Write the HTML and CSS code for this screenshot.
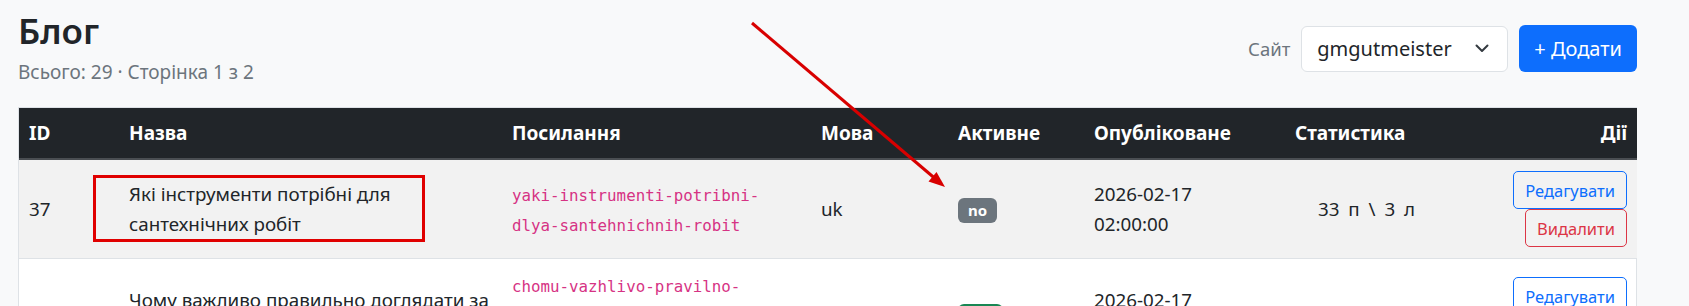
FILE: index.html
```html
<!DOCTYPE html>
<html lang="uk">

<head>
    <meta charset="UTF-8">
    <meta name="viewport" content="width=device-width, initial-scale=1.0">
    <title>Блог</title>
    <link rel="stylesheet" href="styles.css">
</head>

<body>

    <div class="page">
        <div class="page-head">
            <div>
                <h1 class="title">Блог</h1>
                <div class="subtitle">Всього: 29 · Сторінка 1 з 2</div>
            </div>
            <div class="toolbar">
                <span class="toolbar-label">Сайт</span>
                <div class="site-select">
                    <span>gmgutmeister</span>
                    <svg width="14" height="9" viewBox="0 0 14 9">
                        <polyline points="1.5,1.5 7,7 12.5,1.5" fill="none" stroke="#343a40" stroke-width="2"
                            stroke-linecap="round" stroke-linejoin="round" />
                    </svg>
                </div>
                <button class="btn-add">+ Додати</button>
            </div>
        </div>

        <div class="table-wrap">
            <table class="posts">
                <colgroup>
                    <col class="col-id">
                    <col class="col-name">
                    <col class="col-link">
                    <col class="col-lang">
                    <col class="col-active">
                    <col class="col-date">
                    <col class="col-stats">
                    <col class="col-actions">
                </colgroup>
                <thead>
                    <tr>
                        <th>ID</th>
                        <th>Назва</th>
                        <th>Посилання</th>
                        <th>Мова</th>
                        <th>Активне</th>
                        <th>Опубліковане</th>
                        <th>Статистика</th>
                        <th class="text-end">Дії</th>
                    </tr>
                </thead>
                <tbody>
                    <tr class="striped">
                        <td>37</td>
                        <td>Які інструменти потрібні для сантехнічних робіт</td>
                        <td><code>yaki-instrumenti-potribni-dlya-santehnichnih-robit</code></td>
                        <td>uk</td>
                        <td><span class="badge badge-no">no</span></td>
                        <td>2026-02-17<br>02:00:00</td>
                        <td class="stats">33 п \ 3 л</td>
                        <td>
                            <div class="actions">
                                <button class="btn-sm btn-edit">Редагувати</button>
                                <button class="btn-sm btn-delete">Видалити</button>
                            </div>
                        </td>
                    </tr>
                    <tr>
                        <td>36</td>
                        <td>Чому важливо правильно доглядати за сантехнічним обладнанням</td>
                        <td><code>chomu-vazhlivo-pravilno-doglyadati-za-santehnichnim-obladnannyam</code></td>
                        <td>uk</td>
                        <td><span class="badge badge-yes">yes</span></td>
                        <td>2026-02-17<br>02:00:00</td>
                        <td class="stats">41 п \ 5 л</td>
                        <td>
                            <div class="actions">
                                <button class="btn-sm btn-edit">Редагувати</button>
                                <button class="btn-sm btn-delete">Видалити</button>
                            </div>
                        </td>
                    </tr>
                </tbody>
            </table>
        </div>
    </div>

    <!-- annotation drawn over the screenshot -->
    <svg class="annotation" width="1689" height="306" viewBox="0 0 1689 306">
        <rect x="94.5" y="176.5" width="329" height="64" fill="none" stroke="#e00000" stroke-width="3" />
        <line x1="752" y1="23" x2="938" y2="181" stroke="#d80000" stroke-width="3" />
        <polygon points="945,187 928.5,181.5 936.5,172" fill="#d80000" />
    </svg>

</body>

</html>
```

FILE: styles.css
```css
body {
    margin: 0;
    padding: 0;
    position: relative;
    background-color: #f8f9fa;
    color: #212529;
    font-family: "Noto Sans", "DejaVu Sans", sans-serif;
}

.page {
    padding: 0 52px 0 18px;
}

.page-head {
    display: flex;
    justify-content: space-between;
    align-items: flex-start;
}

.title {
    margin: 10px 0 7px;
    font-size: 35px;
    font-weight: 600;
    line-height: 42px;
}

.subtitle {
    color: #6c757d;
    font-size: 19px;
    line-height: 27px;
}

.toolbar {
    display: flex;
    align-items: center;
    gap: 11px;
    margin-top: 25px;
}

.toolbar-label {
    color: #6c757d;
    font-size: 18.5px;
}

.site-select {
    display: flex;
    align-items: center;
    justify-content: space-between;
    box-sizing: border-box;
    width: 207px;
    height: 46px;
    padding: 0 18px 0 15px;
    background-color: #fff;
    border: 1px solid #dee2e6;
    border-radius: 6px;
    font-size: 20px;
}

.btn-add {
    height: 47px;
    padding: 0 15px;
    background-color: #0d6efd;
    color: #fff;
    border: none;
    border-radius: 6px;
    font-family: inherit;
    font-size: 20px;
}

.table-wrap {
    margin-top: 21px;
    background-color: #fff;
    border: 1px solid #dee2e6;
}

.posts {
    width: 100%;
    border-collapse: collapse;
    table-layout: fixed;
}

.col-id { width: 100px; }
.col-name { width: 383px; }
.col-link { width: 309px; }
.col-lang { width: 137px; }
.col-active { width: 136px; }
.col-date { width: 201px; }
.col-stats { width: 163px; }
.col-actions { width: 189px; }

.posts th {
    background-color: #212529;
    color: #fff;
    text-align: left;
    font-size: 19px;
    font-weight: 700;
    line-height: 28px;
    padding: 11px 10px;
    border-bottom: 2px solid #4a4e52;
}

.posts td {
    font-size: 18.8px;
    line-height: 30px;
    padding: 11px 10px;
    vertical-align: middle;
    border-bottom: 1px solid #dee2e6;
}

.posts tr.striped td {
    background-color: #f2f2f2;
}

.text-end {
    text-align: right !important;
}

.posts td.stats {
    text-align: center;
    word-spacing: 4px;
}

code {
    color: #d63384;
    font-family: "DejaVu Sans Mono", "Liberation Mono", monospace;
    font-size: 15.8px;
    line-height: 1;
    word-wrap: break-word;
}

.badge {
    display: inline-block;
    padding: 5px 10px;
    border-radius: 6px;
    color: #fff;
    font-size: 15px;
    font-weight: 700;
    line-height: 15px;
    vertical-align: middle;
}

.badge-no {
    background-color: #6c757d;
}

.badge-yes {
    background-color: #198754;
}

.actions {
    display: flex;
    flex-direction: column;
    align-items: flex-end;
}

.btn-sm {
    height: 38px;
    padding: 0 11px;
    background-color: transparent;
    border: 1px solid;
    border-radius: 5px;
    font-family: inherit;
    font-size: 16.5px;
}

.btn-edit {
    color: #0d6efd;
    border-color: #0d6efd;
}

.btn-delete {
    color: #dc3545;
    border-color: #dc3545;
}

.annotation {
    position: absolute;
    top: 0;
    left: 0;
    pointer-events: none;
}
```
